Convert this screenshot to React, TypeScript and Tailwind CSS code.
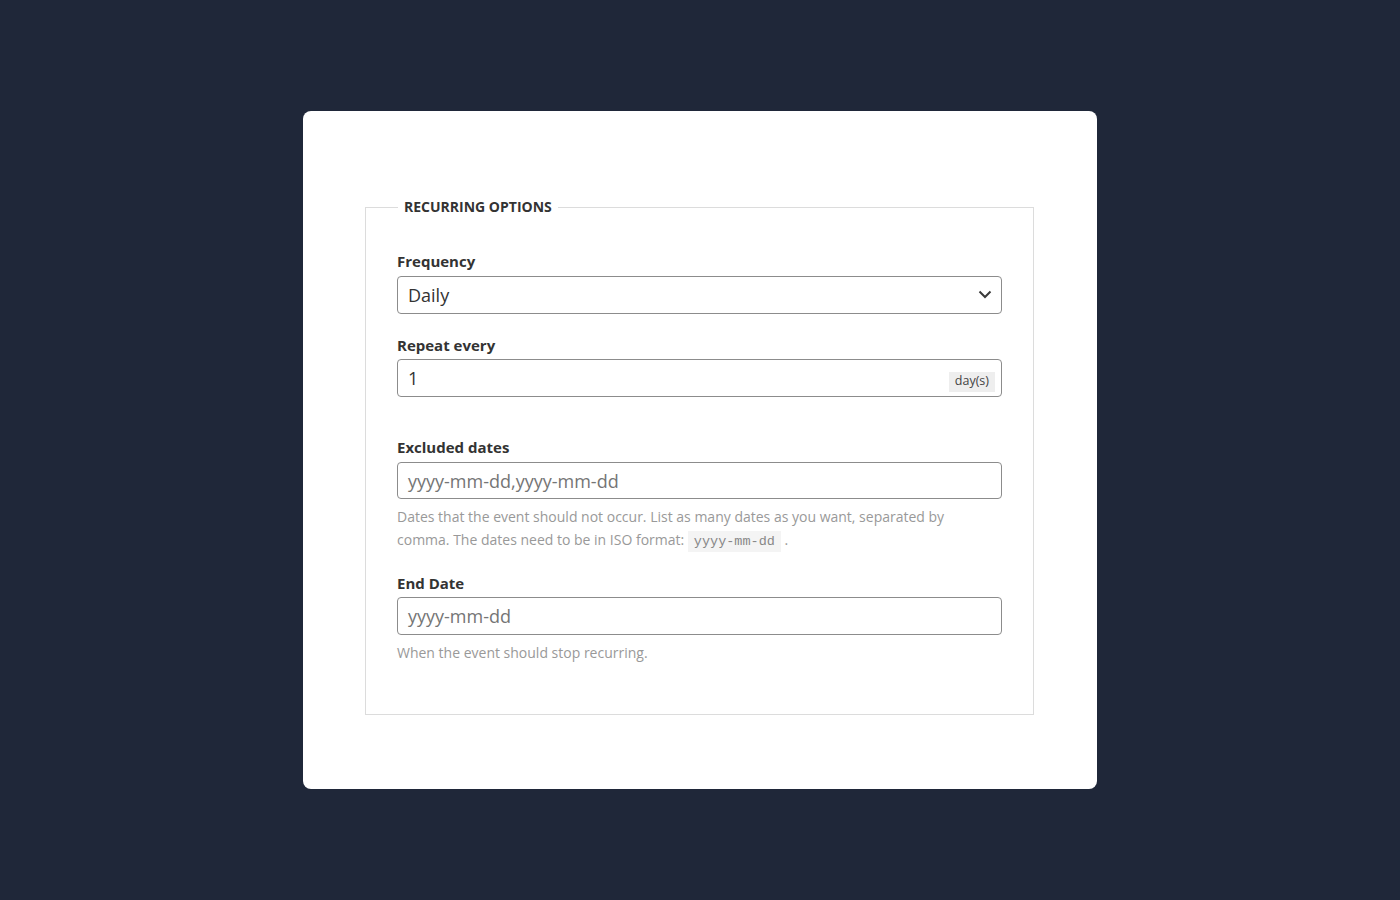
import React from "react";

const font = { fontFamily: '"Open Sans", "Noto Sans", sans-serif' };

export default function App() {
  return (
    <div className="min-h-[900px] w-full bg-[#1f2739] flex justify-center pt-[111px]" style={font}>
      <div className="w-[794px] h-[678px] bg-white rounded-[8px] pl-[62px] pr-[63px] pt-[86px]">
        <fieldset className="border border-[#dcdcdc] px-[31px] pt-[33px] pb-[50px] m-0">
          <legend className="px-[6px] ml-[1px] text-[14px] font-bold uppercase text-[#333] leading-[20px]">
            Recurring Options
          </legend>

          <label className="block text-[15px] font-bold text-[#333] leading-[22px]">Frequency</label>
          <div className="relative mt-[4px] h-[38px] border border-[#8c8c8c] rounded-[4px] flex items-center pl-[10px]">
            <span className="text-[18px] text-[#333] leading-none">Daily</span>
            <svg className="absolute right-[9px] top-[12px]" width="14" height="10" viewBox="0 0 14 10" fill="none">
              <path d="M1.5 2.5 L7 8 L12.5 2.5" stroke="#3a3a3a" strokeWidth="2" />
            </svg>
          </div>

          <label className="block mt-[20px] text-[15px] font-bold text-[#333] leading-[22px]">Repeat every</label>
          <div className="mt-[3px] h-[38px] border border-[#8c8c8c] rounded-[4px] flex items-center pl-[10px] pr-[6px]">
            <span className="text-[18px] text-[#333] leading-none flex-1">1</span>
            <span className="mt-[7px] bg-[#eeeeee] px-[6px] h-[20px] flex items-center text-[12.5px] text-[#444]">day(s)</span>
          </div>

          <label className="block mt-[39px] text-[15px] font-bold text-[#333] leading-[22px]">Excluded dates</label>
          <div className="mt-[4px] h-[37px] border border-[#8c8c8c] rounded-[4px] flex items-center pl-[10px]">
            <span className="text-[18px] text-[#757575] leading-none">yyyy-mm-dd,yyyy-mm-dd</span>
          </div>
          <p className="mt-[6px] text-[14px] leading-[23px] text-[#999] pr-[40px]">
            Dates that the event should not occur. List as many dates as you want, separated by comma. The dates need to be in ISO format:{" "}
            <code
              className="bg-[#f4f4f4] px-[6px] py-[3px] text-[13.5px] leading-[14px] text-[#888]"
              style={{ fontFamily: '"Liberation Mono", "DejaVu Sans Mono", monospace' }}
            >
              yyyy-mm-dd
            </code>
            {" "}.
          </p>

          <label className="block mt-[21px] text-[15px] font-bold text-[#333] leading-[22px]">End Date</label>
          <div className="mt-[3px] h-[38px] border border-[#8c8c8c] rounded-[4px] flex items-center pl-[10px]">
            <span className="text-[18px] text-[#757575] leading-none">yyyy-mm-dd</span>
          </div>
          <p className="mt-[6px] text-[14px] leading-[23px] text-[#999]">When the event should stop recurring.</p>
        </fieldset>
      </div>
    </div>
  );
}
